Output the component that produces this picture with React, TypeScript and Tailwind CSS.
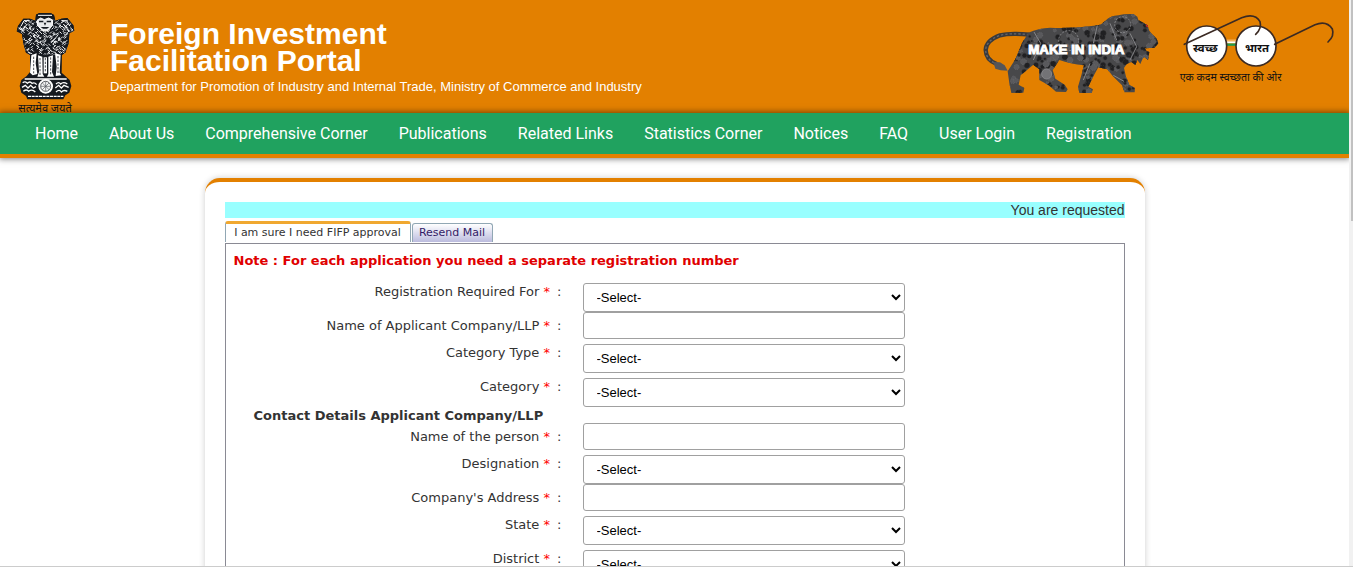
import clsx from "clsx";

interface Field {
  id: string;
  label: string;
  type: "select" | "text" | "heading";
}

const navItems = [
  "Home",
  "About Us",
  "Comprehensive Corner",
  "Publications",
  "Related Links",
  "Statistics Corner",
  "Notices",
  "FAQ",
  "User Login",
  "Registration",
];

const fields: Field[] = [
  { id: "registration-for", label: "Registration Required For", type: "select" },
  { id: "company-name", label: "Name of Applicant Company/LLP", type: "text" },
  { id: "category-type", label: "Category Type", type: "select" },
  { id: "category", label: "Category", type: "select" },
  { id: "contact", label: "Contact Details Applicant Company/LLP", type: "heading" },
  { id: "person", label: "Name of the person", type: "text" },
  { id: "designation", label: "Designation", type: "select" },
  { id: "address", label: "Company's Address", type: "text" },
  { id: "state", label: "State", type: "select" },
  { id: "district", label: "District", type: "select" },
];

const LION_BODY =
  "M175 98 Q205 84 240 83 Q310 86 385 76 Q396 72 406 62 Q420 48 445 46 Q462 41 490 42 L502 50 L505 60 L522 70 L532 76 L538 92 Q550 108 560 116 L565 130 L554 143 L524 145 L530 154 L538 156 L534 180 L522 170 L517 178 L511 192 L502 180 L496 195 L484 186 L470 192 L462 204 L468 230 L478 254 L495 264 L494 277 L464 277 L456 256 L428 228 L412 208 L385 202 L366 236 L355 260 L369 268 L365 279 L328 279 L324 260 L334 226 L342 196 Q300 192 268 180 L248 210 L256 236 L284 254 L293 268 L288 276 L258 275 L236 256 L208 240 L208 208 L190 194 L152 226 L146 254 L163 264 L160 278 L124 279 L118 250 L113 214 L136 178 L156 130 Z";

// fixed scatter, so the texture is the same on every render
const scatter = (n: number, seed: number) => {
  const v = Math.sin(n * 12.9898 + seed * 78.233) * 43758.5453;
  return v - Math.floor(v);
};

const GEARS = Array.from({ length: 420 }).map((_, i) => ({
  x: 110 + scatter(i, 1) * 455,
  y: 42 + scatter(i, 2) * 238,
  r: 3 + scatter(i, 3) * 6,
  dark: i % 5 < 3,
}));

const HATCH = Array.from({ length: 330 }).map((_, i) => ({
  x: 50 + scatter(i, 4) * 172,
  y: 58 + scatter(i, 5) * 104,
  tilt: scatter(i, 6) > 0.5 ? 6 : -6,
}));

const EMBLEM_TOP =
  "M108 44 L118 39 H152 L162 45 L166 62 L184 56 L202 54 L220 76 L223 92 L208 100 L206 130 L196 158 L184 166 H92 L78 158 L70 130 L66 102 L50 94 L54 78 L70 56 L90 56 L106 62 Z";

const Emblem = () => (
  <svg
    viewBox="45 36 180 300"
    className="h-[100px] w-[60px] shrink-0 overflow-visible"
    role="img"
    aria-label="State Emblem of India"
  >
    <defs>
      <clipPath id="emblem-top">
        <path d={EMBLEM_TOP} />
      </clipPath>
    </defs>
    <path d={EMBLEM_TOP} fill="#15191f" />
    <path
      d="M90 160 H186 L185 218 L196 228 L209 240 L214 258 L208 278 L196 286 L190 298 H82 L78 288 L64 278 L59 258 L64 240 L80 228 L90 216 Z"
      fill="#15191f"
    />
    <g clipPath="url(#emblem-top)" stroke="#eceef0" strokeWidth="3" fill="none">
      {HATCH.map((h, i) => (
        <path key={i} d={`M${h.x} ${h.y} l${h.tilt} 6`} />
      ))}
      <path d={EMBLEM_TOP} stroke="#15191f" strokeWidth="5" />
    </g>
    <g fill="none" stroke="#fff" strokeWidth="3">
      <path d="M114 46 H156" />
      <path d="M112 60 L122 54 L133 59 L146 54 L158 60 L157 76 L146 90 L136 94 L124 89 L113 76 Z" fill="#e9eaec" />
      <path d="M58 88 L72 62 L88 62 M64 94 L82 72 M215 88 L200 62 L184 62 M208 94 L190 72" />
    </g>
    <g fill="#15191f">
      <path d="M117 62 h13 v5 h-13z M140 62 h13 v5 h-13z M131 68 h8 l-4 9z M122 81 h26 l-7 5 h-12z" />
      <path d="M62 78 h9 v5 h-9z M203 78 h9 v5 h-9z" />
    </g>
    <g fill="#fff">
      <path d="M94 166 L110 160 L107 190 L112 222 L98 226 L90 218 Z" />
      <path d="M114 166 L127 170 L128 222 L133 230 H112 L117 216 Z" />
      <path d="M145 170 L159 166 L156 216 L162 230 H141 L145 222 Z" />
      <path d="M165 160 L182 164 L179 218 L184 226 L167 228 L170 200 Z" />
      <path d="M131 172 h10 v48 h-10 z" />
    </g>
    <path
      d="M101 170 V220 M120 174 V226 M136 174 V218 M152 172 V226 M174 168 V222"
      stroke="#4b4f55"
      strokeWidth="3"
      strokeDasharray="7 4"
    />
    <g fill="none" stroke="#fff" strokeWidth="4">
      <path d="M74 237 H200" />
      <path d="M84 289 H190" strokeDasharray="9 2" />
      <path d="M68 248 q8 -6 14 2 q8 -8 14 0 q8 -4 14 4 M66 262 l10 -6 8 8 8 -8 8 8 8 -4 M70 274 q10 -8 16 0 q10 -8 20 2" />
      <path d="M168 252 q8 -8 14 0 q8 -8 20 0 M166 264 l10 -8 8 8 8 -8 14 6 M168 276 q10 -10 16 0 q8 -8 18 -2" />
      <circle cx="137" cy="259" r="20" fill="#f4f4f4" />
    </g>
    <circle cx="137" cy="259" r="15" fill="none" stroke="#15191f" strokeWidth="2" />
    <path d="M137 245 V273 M123 259 H151 M127 249 L147 269 M147 249 L127 269" stroke="#55595f" strokeWidth="2" />
    <text
      x="135"
      y="336"
      textAnchor="middle"
      fontSize="33"
      className="font-['Noto_Sans',sans-serif]"
      fill="#151515"
    >
      सत्यमेव जयते
    </text>
  </svg>
);

const MakeInIndia = () => (
  <svg viewBox="39 36 531 249" className="h-[83px] w-[177px] shrink-0" role="img" aria-label="Make in India">
    <defs>
      <clipPath id="lion">
        <path d={LION_BODY} />
      </clipPath>
    </defs>
    <path d="M178 104 Q120 98 90 106 Q48 122 47 150 Q48 180 80 192" fill="none" stroke="#3a3a3c" strokeWidth="13" />
    <path
      d="M178 104 Q120 98 90 106 Q48 122 47 150 Q48 180 80 192"
      fill="none"
      stroke="#66666a"
      strokeWidth="4"
      strokeDasharray="7 6"
    />
    <path d="M70 186 L90 187 L104 196 L113 212 L92 211 L76 206 Z" fill="#555558" />
    <path d={LION_BODY} fill="#48484a" />
    <g clipPath="url(#lion)">
      {GEARS.map((g, i) => (
        <circle
          key={i}
          cx={g.x}
          cy={g.y}
          r={g.r}
          fill={g.dark ? "#202022" : "#59595c"}
          stroke={g.dark ? "#3e3e40" : "#6c6c70"}
          strokeWidth="2"
          strokeDasharray="4 3"
        />
      ))}
      <g fill="none" stroke="#858588" strokeWidth="3">
        <circle cx="296" cy="122" r="30" strokeDasharray="6 4" />
        <circle cx="230" cy="222" r="15" fill="#737376" />
        <circle cx="458" cy="74" r="24" strokeDasharray="6 4" />
        <path d="M382 76 L370 130 M192 96 L212 130 L190 180 M420 70 L440 120 M480 100 L500 140 L480 180 M430 226 L462 244 M360 190 L340 240" />
      </g>
    </g>
    <path d="M530 72 l5 10 -8 -3z" fill="#d8261c" />
    <text
      x="319"
      y="163"
      textAnchor="middle"
      fontSize="40"
      fontWeight="700"
      fill="#fff"
      stroke="#fff"
      strokeWidth="3"
      className="font-['Liberation_Sans',Arial,sans-serif]"
    >
      MAKE IN INDIA
    </text>
  </svg>
);

const SwachhBharat = () => (
  <svg viewBox="21 36 480 240" className="h-20 w-40 shrink-0 overflow-visible" role="img" aria-label="Swachh Bharat">
    <path d="M166 121 H200" stroke="#f7b25c" strokeWidth="5" />
    <path d="M166 127 H200" stroke="#fff" strokeWidth="6" />
    <path d="M166 134 H200" stroke="#1f9b4b" strokeWidth="7" />
    <g fill="#fff" stroke="#3b2a23" strokeWidth="5">
      <circle cx="110" cy="138" r="60" />
      <circle cx="258" cy="138" r="60" />
    </g>
    <g fill="none" stroke="#3b2a23" strokeWidth="5" strokeLinecap="round">
      <path d="M43 133 L215 53 Q255 38 270 65 Q276 85 257 103" />
      <path d="M314 133 L435 74 Q470 60 487 87 Q494 108 474 126" />
    </g>
    <g className="font-['Noto_Sans',sans-serif]" fill="#111" textAnchor="middle">
      <text x="106" y="155" fontSize="34" fontWeight="700">स्वच्छ</text>
      <text x="261" y="155" fontSize="34" fontWeight="700">भारत</text>
      <text x="182" y="242" fontSize="32">एक कदम स्वच्छता की ओर</text>
    </g>
  </svg>
);

const Header = () => (
  <header className="shrink-0">
    <div className="flex h-[113px] items-start overflow-hidden bg-[#e38000] pt-3 pr-3 pl-[15px]">
      <Emblem />
      <div className="grow pt-2 pl-[35px] font-['Liberation_Sans',Arial,sans-serif] text-white">
        <h1 className="text-[30px] leading-[27px] font-bold">
          Foreign Investment
          <br />
          Facilitation Portal
        </h1>
        <p className="text-[13px] leading-[26px]">
          Department for Promotion of Industry and Internal Trade, Ministry of Commerce and Industry
        </p>
      </div>
      <div className="flex gap-[17px]">
        <MakeInIndia />
        <SwachhBharat />
      </div>
    </div>
    <nav className="relative border-b-4 border-[#e38000] bg-[#20a25f] shadow-[0_0_6px_1px_rgba(0,0,0,0.5)]">
      <ul className="flex gap-[31px] pl-[35px] font-[Roboto,sans-serif] text-base leading-[41px] text-white">
        {navItems.map((item) => (
          <li key={item}>
            <a href="#">{item}</a>
          </li>
        ))}
      </ul>
    </nav>
  </header>
);

const FormRow = ({ id, label, type }: Field) => {
  if (type === "heading") {
    return <h2 className="pl-7 text-[13px] leading-[18px] -mb-0.5 font-bold">{label}</h2>;
  }

  return (
    <div className="grid grid-cols-[336px_322px] gap-[21px]">
      <label htmlFor={id} className="pt-1.5 text-right text-[13px] leading-4">
        {label} <span className="mr-[3px] text-[#f00]">*</span> :
      </label>
      {type === "select" ? (
        <div className="pt-[5px]">
          <select
            id={id}
            className="block h-[29px] w-full rounded-[3px] border border-[#a0a0a0] bg-white pl-[9px] font-['Liberation_Sans',Arial,sans-serif] text-[13px] text-black"
          >
            <option>-Select-</option>
          </select>
        </div>
      ) : (
        <input
          id={id}
          type="text"
          className="block h-[27px] w-full rounded-[3px] border border-[#a0a0a0] bg-white px-3 font-['Liberation_Sans',Arial,sans-serif] text-[13px]"
        />
      )}
    </div>
  );
};

const Tabs = () => (
  <div role="tablist" className="flex items-end gap-px text-[11px]">
    {["I am sure I need FIFP approval", "Resend Mail"].map((tab, i) => (
      <button
        key={tab}
        role="tab"
        aria-selected={i === 0}
        className={clsx(
          "rounded-t-[3px] border border-b-0 border-[#91a7b4]",
          i === 0
            ? "h-[21px] w-[186px] border-t-[3px] border-t-[#f0a830] bg-white"
            : "h-[19px] w-[81px] border-b bg-linear-to-b from-white to-[#bcbcde] text-[#331a66]",
        )}
      >
        {tab}
      </button>
    ))}
  </div>
);

const App = () => {
  return (
    <div className="flex h-screen flex-col overflow-hidden bg-white">
      <div className="flex min-h-0 grow">
        <div className="flex min-w-0 grow flex-col overflow-hidden">
          <Header />
          <main className="mx-auto mt-5 w-[940px] grow rounded-t-[15px] border-t-4 border-[#e38000] bg-white px-5 pt-5 font-[Verdana,'DejaVu_Sans',sans-serif] text-[#333] shadow-[0_0_6px_rgba(0,0,0,0.2)]">
            <p className="h-4 overflow-hidden bg-[#9ff] text-right font-['Liberation_Sans',Arial,sans-serif] text-sm leading-4">
              You are requested
            </p>
            <div className="pt-[3px]">
              <Tabs />
            </div>
            <form className="mt-px h-[600px] border border-[#8a8a94]">
              <p className="px-2 pt-[9px] pb-[9px] text-[13px] leading-4 font-bold text-[#e00000]">
                Note : For each application you need a separate registration number
              </p>
              {fields.map((field) => (
                <FormRow key={field.id} {...field} />
              ))}
            </form>
          </main>
        </div>
        {/* scrollbar edge */}
        <div className="w-1 shrink-0 bg-[#f1f1f1] pl-0.5">
          <div className="h-[39%] bg-[#c1c1c1]" />
        </div>
      </div>
      <footer className="h-[3px] shrink-0 border-t border-[#ccc]" />
    </div>
  );
};

export default App;
